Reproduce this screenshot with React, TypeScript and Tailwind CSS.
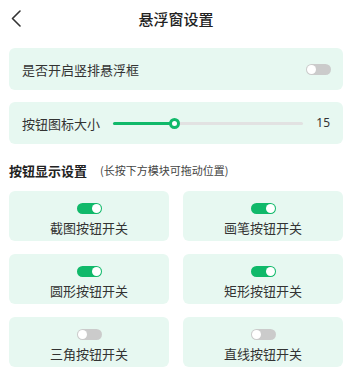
import React from "react";

const font = { fontFamily: '"Noto Sans CJK SC", "Noto Sans", sans-serif' };

function Toggle({ on }: { on: boolean }) {
  return (
    <div
      className={`w-[25px] h-[11px] rounded-full flex items-center px-[1px] ${
        on ? "bg-[#10b96a] justify-end" : "bg-[#cbcbcb] justify-start"
      }`}
    >
      <div className="w-[9px] h-[9px] rounded-full bg-white" />
    </div>
  );
}

const items: { label: string; on: boolean }[] = [
  { label: "截图按钮开关", on: true },
  { label: "画笔按钮开关", on: true },
  { label: "圆形按钮开关", on: true },
  { label: "矩形按钮开关", on: true },
  { label: "三角按钮开关", on: false },
  { label: "直线按钮开关", on: false },
];

export default function App() {
  return (
    <div className="w-[352px] h-[369px] bg-white text-[#333333] overflow-hidden" style={font}>
      <div className="h-[36px] grid grid-cols-[1fr_auto_1fr] items-center">
        <div className="pl-[10px] flex items-center">
          <svg width="12" height="17" viewBox="0 0 12 17" fill="none">
            <path d="M10 1 L2.5 8.5 L10 16" stroke="#333" strokeWidth="1.6" strokeLinecap="round" strokeLinejoin="round" />
          </svg>
        </div>
        <div className="text-[15px] font-medium leading-none text-[#222]">悬浮窗设置</div>
        <div />
      </div>

      <div className="mx-[9px] mt-[12px] h-[42px] rounded-[6px] bg-[#e7f8f1] flex items-center justify-between pl-[13px] pr-[12px]">
        <span className="text-[13px] leading-none">是否开启竖排悬浮框</span>
        <Toggle on={false} />
      </div>

      <div className="mx-[9px] mt-[12px] h-[42px] rounded-[6px] bg-[#e7f8f1] flex items-center pl-[13px] pr-[13px]">
        <span className="text-[13px] leading-none">按钮图标大小</span>
        <div className="ml-[13px] flex-1 h-[11px] flex items-center relative">
          <div className="w-full h-[3px] rounded-full bg-[#e2e2e2] flex">
            <div className="w-[62px] h-[3px] rounded-full bg-[#10b96a]" />
          </div>
          <div className="absolute left-[56px] top-0 w-[11px] h-[11px] rounded-full border-[3px] border-[#10b96a] bg-white" />
        </div>
        <span className="ml-[13px] text-[12px] leading-none" style={{ fontFamily: '"Noto Sans", sans-serif' }}>15</span>
      </div>

      <div className="mx-[9px] h-[47px] flex items-center pt-[6px]">
        <span className="text-[13px] font-bold leading-none text-[#222]">按钮显示设置</span>
        <span className="ml-[13px] text-[11px] leading-none text-[#444]">(长按下方模块可拖动位置)</span>
      </div>

      <div className="mx-[9px] grid grid-cols-2 gap-x-[14px] gap-y-[13px]">
        {items.map((it) => (
          <div key={it.label} className="h-[50px] rounded-[6px] bg-[#e7f8f1] flex flex-col items-center pt-[12px]">
            <Toggle on={it.on} />
            <span className="mt-[7px] text-[13px] leading-none">{it.label}</span>
          </div>
        ))}
      </div>
    </div>
  );
}
